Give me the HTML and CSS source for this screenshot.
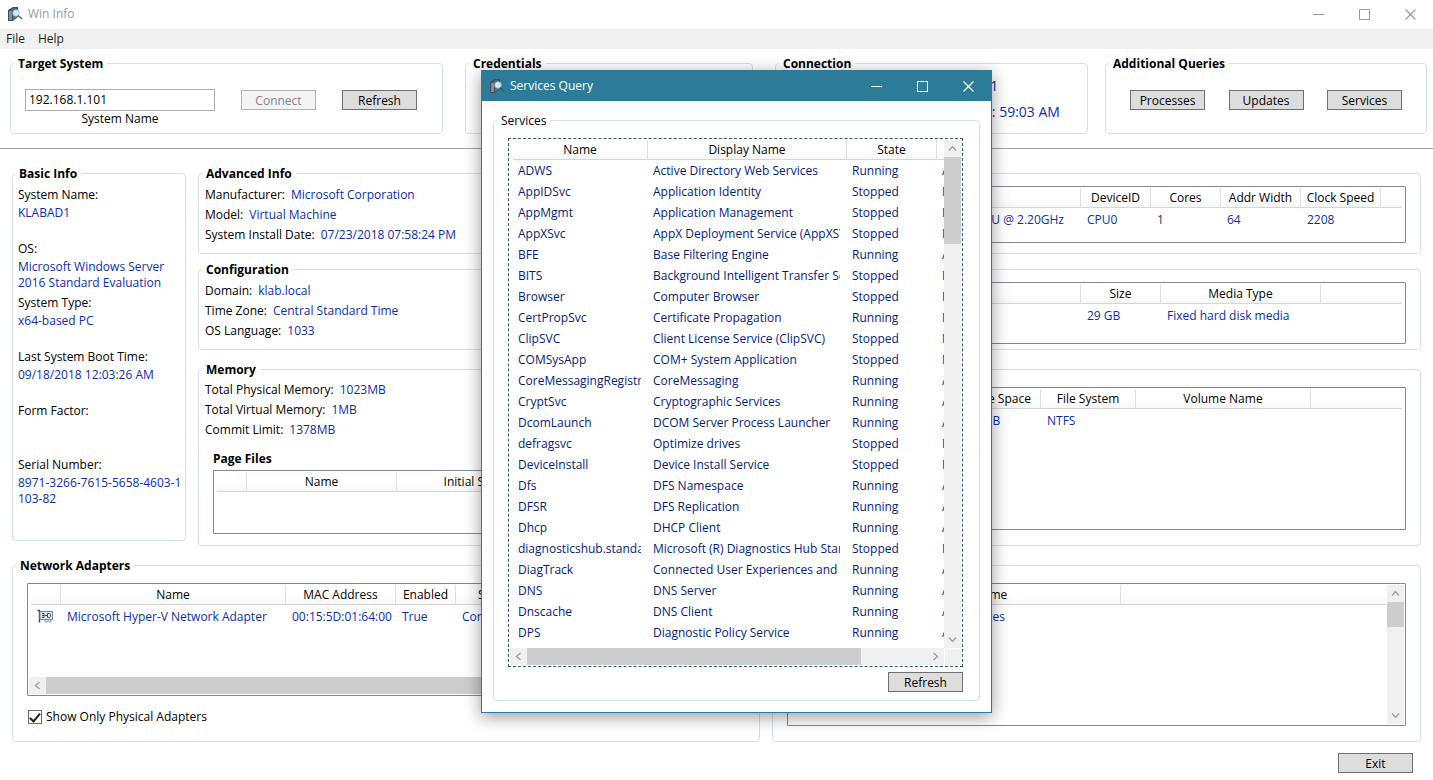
FILE: index.html
```html
<!DOCTYPE html>
<html lang="en">
<head>
<meta charset="utf-8">
<title>Win Info</title>
<link rel="stylesheet" href="styles.css">
</head>
<body>
<svg class="defs" width="0" height="0" aria-hidden="true">
  <symbol id="app" viewBox="0 0 16 16">
    <path d="M1 4 6 1h5v10l-5 4H1z" fill="#414a5e"/>
    <path d="M2 5h3v9H2z" fill="#858c9a"/>
    <path d="M2 4.500 6.500 2H10L6 4.500z" fill="#59637a"/>
    <path d="M6 5v9l4-3V3z" fill="#6f6a6e"/>
    <circle cx="9" cy="7" r="3.300" fill="#c9effb" stroke="#8fb2c4" stroke-width=".8"/>
    <path d="m11.200 9.500 3.800 3.500" stroke="#385a7c" stroke-width="1.200"/>
  </symbol>
  <symbol id="nic" viewBox="0 0 16 16">
    <path d="M.5 1.500h2v12" fill="none" stroke="#2d4a66" stroke-width="1.400"/>
    <path d="M3 2.500h12.500v8H3z" fill="#dce9ee" stroke="#6e8796"/>
    <path d="M5 4.500h2v4H5m0-2h2M8 6.500h2M10.500 4.500h2l1 1v2l-1 1h-2z" fill="none" stroke="#2d4a66"/>
    <path d="M8 11v2h2v-1h2v1h2v-2" fill="none" stroke="#8199a6"/>
  </symbol>
  <symbol id="min" viewBox="0 0 11 11"><path d="M0 5.500h11" stroke="currentColor"/></symbol>
  <symbol id="max" viewBox="0 0 11 11"><path d="M.5.5h10v10H.5z" fill="none" stroke="currentColor"/></symbol>
  <symbol id="close" viewBox="0 0 11 11"><path d="m.5.5 10 10m0-10-10 10" stroke="currentColor" stroke-width="1.200"/></symbol>
  <symbol id="up" viewBox="0 0 9 9"><path d="M1 6.500 4.500 2.500 8 6.500" fill="none" stroke="currentColor" stroke-width="1.400"/></symbol>
  <symbol id="down" viewBox="0 0 9 9"><path d="M1 2.500 4.500 6.500 8 2.500" fill="none" stroke="currentColor" stroke-width="1.400"/></symbol>
  <symbol id="left" viewBox="0 0 9 9"><path d="M6.500 1 2.500 4.500 6.500 8" fill="none" stroke="currentColor" stroke-width="1.400"/></symbol>
  <symbol id="right" viewBox="0 0 9 9"><path d="M2.500 1 6.500 4.500 2.500 8" fill="none" stroke="currentColor" stroke-width="1.400"/></symbol>
</svg>

<header class="titlebar">
  <svg class="app-icon"><use href="#app"/></svg>
  <h1 class="title">Win Info</h1>
  <button class="caption" aria-label="Minimize"><svg><use href="#min"/></svg></button>
  <button class="caption" aria-label="Maximize"><svg><use href="#max"/></svg></button>
  <button class="caption" aria-label="Close"><svg><use href="#close"/></svg></button>
</header>
<nav class="menu">
  <button class="menu-item">File</button>
  <button class="menu-item">Help</button>
</nav>

<section class="top">
  <fieldset class="group target">
    <legend>Target System</legend>
    <div class="system">
      <input id="system" type="text" value="192.168.1.101">
      <label for="system">System Name</label>
    </div>
    <button class="btn" disabled>Connect</button>
    <button class="btn">Refresh</button>
  </fieldset>
  <fieldset class="group credentials"><legend>Credentials</legend></fieldset>
  <fieldset class="group connection">
    <legend>Connection</legend>
    <p>Computer: <b>192.168.1.101</b></p>
    <p>Updated: <b>09/18/2018 12: 59:03 AM</b></p>
  </fieldset>
  <fieldset class="group queries">
    <legend>Additional Queries</legend>
    <button class="btn">Processes</button>
    <button class="btn">Updates</button>
    <button class="btn">Services</button>
  </fieldset>
</section>
<hr class="rule">

<main class="main">
  <fieldset class="group basic">
    <legend>Basic Info</legend>
    <dl class="facts">
      <div><dt>System Name:</dt><dd>KLABAD1</dd></div>
      <div><dt>OS:</dt><dd>Microsoft Windows Server 2016 Standard Evaluation</dd></div>
      <div><dt>System Type:</dt><dd>x64-based PC</dd></div>
      <div><dt>Last System Boot Time:</dt><dd>09/18/2018 12:03:26 AM</dd></div>
      <div><dt>Form Factor:</dt><dd></dd></div>
      <div><dt>Serial Number:</dt><dd class="serial">8971-3266-7615-5658-4603-1103-82</dd></div>
    </dl>
  </fieldset>

  <fieldset class="group">
    <legend>Advanced Info</legend>
    <dl class="pairs">
      <div><dt>Manufacturer:</dt><dd>Microsoft Corporation</dd></div>
      <div><dt>Model:</dt><dd>Virtual Machine</dd></div>
      <div><dt>System Install Date:</dt><dd>07/23/2018 07:58:24 PM</dd></div>
    </dl>
  </fieldset>
  <fieldset class="group lists">
    <legend>Processor</legend>
    <div class="list list-cpu">
      <table class="grid">
        <colgroup><col class="w30"><col class="w260"><col class="w70"><col class="w70"><col class="w80"><col class="w80"><col></colgroup>
        <thead><tr><th></th><th>Name</th><th>DeviceID</th><th>Cores</th><th>Addr Width</th><th>Clock Speed</th><th></th></tr></thead>
        <tbody><tr><td></td><td>Intel(R) Core(TM) i7-8750H CPU @ 2.20GHz</td><td>CPU0</td><td>1</td><td>64</td><td>2208</td><td></td></tr></tbody>
      </table>
    </div>
  </fieldset>

  <fieldset class="group">
    <legend>Configuration</legend>
    <dl class="pairs">
      <div><dt>Domain:</dt><dd>klab.local</dd></div>
      <div><dt>Time Zone:</dt><dd>Central Standard Time</dd></div>
      <div><dt>OS Language:</dt><dd>1033</dd></div>
    </dl>
  </fieldset>
  <fieldset class="group lists">
    <legend>Disks</legend>
    <div class="list list-disk">
      <table class="grid">
        <colgroup><col class="w30"><col class="w260"><col class="w80"><col class="w160"><col></colgroup>
        <thead><tr><th></th><th>Name</th><th>Size</th><th>Media Type</th><th></th></tr></thead>
        <tbody><tr><td></td><td>Virtual HD</td><td>29 GB</td><td>Fixed hard disk media</td><td></td></tr></tbody>
      </table>
    </div>
  </fieldset>

  <fieldset class="group tall memory">
    <legend>Memory</legend>
    <dl class="pairs">
      <div><dt>Total Physical Memory:</dt><dd>1023MB</dd></div>
      <div><dt>Total Virtual Memory:</dt><dd>1MB</dd></div>
      <div><dt>Commit Limit:</dt><dd>1378MB</dd></div>
    </dl>
    <h2 class="subhead">Page Files</h2>
    <div class="list list-page">
      <table class="grid">
        <colgroup><col class="w30"><col class="w150"><col class="w150"><col></colgroup>
        <thead><tr><th></th><th>Name</th><th>Initial Size</th><th></th></tr></thead>
      </table>
    </div>
  </fieldset>
  <fieldset class="group lists tall">
    <legend>Volumes</legend>
    <div class="list list-volume">
      <table class="grid">
        <colgroup><col class="w30"><col class="w70"><col class="w70"><col class="w80"><col class="w95"><col class="w175"><col></colgroup>
        <thead><tr><th></th><th>Name</th><th>Size</th><th>Free Space</th><th>File System</th><th>Volume Name</th><th></th></tr></thead>
        <tbody><tr><td></td><td>C:</td><td>29 GB</td><td>18 GB</td><td>NTFS</td><td></td><td></td></tr></tbody>
      </table>
    </div>
  </fieldset>

  <fieldset class="group lists tall network">
    <legend>Network Adapters</legend>
    <div class="list list-network">
      <table class="grid">
        <colgroup><col class="w30"><col class="w225"><col class="w110"><col class="w60"><col class="w80"><col></colgroup>
        <thead><tr><th></th><th>Name</th><th>MAC Address</th><th>Enabled</th><th>Status</th><th></th></tr></thead>
        <tbody><tr><td><svg class="nic"><use href="#nic"/></svg></td><td>Microsoft Hyper-V Network Adapter</td><td>00:15:5D:01:64:00</td><td>True</td><td>Connected</td><td></td></tr></tbody>
      </table>
      <div class="bar bar-h">
        <button class="arrow" aria-label="Scroll left"><svg><use href="#left"/></svg></button>
        <div class="thumb thumb-network"></div>
        <button class="arrow end" aria-label="Scroll right"><svg><use href="#right"/></svg></button>
      </div>
    </div>
    <label class="check"><input type="checkbox" checked>Show Only Physical Adapters</label>
  </fieldset>
  <fieldset class="group lists tall">
    <legend>Features</legend>
    <div class="list list-feature">
      <table class="grid">
        <colgroup><col class="w70"><col class="w260"><col></colgroup>
        <thead><tr><th>ID</th><th>Name</th><th></th></tr></thead>
        <tbody><tr><td></td><td>File and Storage Services</td><td></td></tr></tbody>
      </table>
      <div class="bar bar-v">
        <button class="arrow" aria-label="Scroll up"><svg><use href="#up"/></svg></button>
        <div class="thumb thumb-feature"></div>
        <button class="arrow end" aria-label="Scroll down"><svg><use href="#down"/></svg></button>
      </div>
    </div>
  </fieldset>
</main>
<footer class="footer"><button class="btn">Exit</button></footer>

<section class="dialog" role="dialog" aria-labelledby="dialog-title">
  <header class="titlebar dialog-bar">
    <svg class="app-icon"><use href="#app"/></svg>
    <h2 class="title" id="dialog-title">Services Query</h2>
    <button class="caption" aria-label="Minimize"><svg><use href="#min"/></svg></button>
    <button class="caption" aria-label="Maximize"><svg><use href="#max"/></svg></button>
    <button class="caption" aria-label="Close"><svg><use href="#close"/></svg></button>
  </header>
  <div class="dialog-body">
    <fieldset class="group services">
      <legend>Services</legend>
      <div class="service-list">
        <div class="viewport">
          <table class="grid service-grid">
            <colgroup><col class="w135"><col class="w199"><col class="w90"><col class="w90"></colgroup>
            <thead><tr><th>Name</th><th>Display Name</th><th>State</th><th></th></tr></thead>
            <tbody>
              <tr><td><div>ADWS</div></td><td><div>Active Directory Web Services</div></td><td>Running</td><td>Auto</td></tr>
              <tr><td><div>AppIDSvc</div></td><td><div>Application Identity</div></td><td>Stopped</td><td>Manual</td></tr>
              <tr><td><div>AppMgmt</div></td><td><div>Application Management</div></td><td>Stopped</td><td>Manual</td></tr>
              <tr><td><div>AppXSvc</div></td><td><div>AppX Deployment Service (AppXSVC)</div></td><td>Stopped</td><td>Manual</td></tr>
              <tr><td><div>BFE</div></td><td><div>Base Filtering Engine</div></td><td>Running</td><td>Auto</td></tr>
              <tr><td><div>BITS</div></td><td><div>Background Intelligent Transfer Service</div></td><td>Stopped</td><td>Manual</td></tr>
              <tr><td><div>Browser</div></td><td><div>Computer Browser</div></td><td>Stopped</td><td>Manual</td></tr>
              <tr><td><div>CertPropSvc</div></td><td><div>Certificate Propagation</div></td><td>Running</td><td>Manual</td></tr>
              <tr><td><div>ClipSVC</div></td><td><div>Client License Service (ClipSVC)</div></td><td>Stopped</td><td>Manual</td></tr>
              <tr><td><div>COMSysApp</div></td><td><div>COM+ System Application</div></td><td>Stopped</td><td>Manual</td></tr>
              <tr><td><div>CoreMessagingRegistrar</div></td><td><div>CoreMessaging</div></td><td>Running</td><td>Auto</td></tr>
              <tr><td><div>CryptSvc</div></td><td><div>Cryptographic Services</div></td><td>Running</td><td>Auto</td></tr>
              <tr><td><div>DcomLaunch</div></td><td><div>DCOM Server Process Launcher</div></td><td>Running</td><td>Auto</td></tr>
              <tr><td><div>defragsvc</div></td><td><div>Optimize drives</div></td><td>Stopped</td><td>Manual</td></tr>
              <tr><td><div>DeviceInstall</div></td><td><div>Device Install Service</div></td><td>Stopped</td><td>Manual</td></tr>
              <tr><td><div>Dfs</div></td><td><div>DFS Namespace</div></td><td>Running</td><td>Auto</td></tr>
              <tr><td><div>DFSR</div></td><td><div>DFS Replication</div></td><td>Running</td><td>Auto</td></tr>
              <tr><td><div>Dhcp</div></td><td><div>DHCP Client</div></td><td>Running</td><td>Auto</td></tr>
              <tr><td><div>diagnosticshub.standardcollector</div></td><td><div>Microsoft (R) Diagnostics Hub Standard</div></td><td>Stopped</td><td>Manual</td></tr>
              <tr><td><div>DiagTrack</div></td><td><div>Connected User Experiences and Telemetry</div></td><td>Running</td><td>Auto</td></tr>
              <tr><td><div>DNS</div></td><td><div>DNS Server</div></td><td>Running</td><td>Auto</td></tr>
              <tr><td><div>Dnscache</div></td><td><div>DNS Client</div></td><td>Running</td><td>Auto</td></tr>
              <tr><td><div>DPS</div></td><td><div>Diagnostic Policy Service</div></td><td>Running</td><td>Auto</td></tr>
            </tbody>
          </table>
        </div>
        <div class="bar bar-v">
          <button class="arrow" aria-label="Scroll up"><svg><use href="#up"/></svg></button>
          <div class="thumb thumb-rows"></div>
          <button class="arrow end" aria-label="Scroll down"><svg><use href="#down"/></svg></button>
        </div>
        <div class="bar bar-h">
          <button class="arrow" aria-label="Scroll left"><svg><use href="#left"/></svg></button>
          <div class="thumb thumb-columns"></div>
          <button class="arrow end" aria-label="Scroll right"><svg><use href="#right"/></svg></button>
        </div>
        <div class="corner"></div>
      </div>
      <button class="btn">Refresh</button>
    </fieldset>
  </div>
</section>
</body>
</html>
```
FILE: styles.css
```css
* { box-sizing: border-box; }
body {
  margin: 0;
  position: relative;
  min-height: 100vh;
  background: #fff;
  color: #000;
  font: 12px/16px "Open Sans", "Noto Sans", sans-serif;
}
button, input { font: inherit; color: inherit; }
p, dl, dd, h1, h2 { margin: 0; }
svg { display: block; }
.defs { position: absolute; }

/* window chrome */
.titlebar { display: flex; align-items: center; height: 28px; margin-bottom: 1px; padding-left: 7px; color: #999; }
.app-icon { width: 16px; height: 16px; margin-right: 5px; }
.title { flex: 1; font-size: 12px; font-weight: 400; }
.caption { width: 46px; height: 27px; padding: 0; border: 0; background: none; display: grid; place-items: center; }
.caption svg { width: 11px; height: 11px; }
.menu { display: flex; height: 20px; background: #f0f0f0; color: #1c1c1c; }
.menu-item { border: 0; background: none; padding: 0 7px 0 6px; }

/* group boxes */
.group {
  min-width: 0;
  margin: 0;
  padding: 4px 6px;
  border: 1px solid #d5dfe5;
  border-radius: 4px;
}
.group legend { height: 16px; padding: 0 4px; margin-left: -3px; font-weight: 700; line-height: 18px; }
.btn {
  width: 75px;
  height: 20px;
  padding: 1px 0 0;
  border: 1px solid #707070;
  background: #ddd;
  line-height: 16px;
}
.btn:disabled { border-color: #adb2b5; background: #f4f4f4; color: #838383; }

.top {
  display: grid;
  grid-template-columns: minmax(0, 455fr) minmax(0, 310fr) minmax(0, 330fr) minmax(0, 322fr);
  padding: 6px 6px 0 10px;
}
.top .group { height: 79px; }
.target, .queries { display: flex; align-items: flex-start; }
.target { margin-right: 22px; padding: 18px 25px 0 14px; gap: 26px; }
.target .btn { margin-top: 1px; }
.system { flex: 1; display: flex; flex-direction: column; align-items: center; }
.system input { width: 100%; height: 22px; padding: 0 3px 2px; border: 1px solid #abadb3; outline: 0; }
.credentials { margin-right: 22px; }
.connection { margin-right: 17px; padding-top: 2px; font-size: 14px; }
.connection legend { font-size: 12px; }
.connection p { line-height: 26px; padding-left: 52px; white-space: nowrap; }
.connection b { font-weight: 400; color: #0b2fa8; }
.queries { padding: 19px 24px 0; justify-content: space-between; }
.group.queries legend { margin-left: -21px; }
.rule { height: 1px; margin: 14px 0 16px; border: 0; background: #a0a0a0; }

.main {
  display: grid;
  grid-template-columns: 174px minmax(0, 562fr) minmax(0, 649fr);
  gap: 7px 12px;
  padding: 0 12px;
}
.main > .group { min-height: 89px; }
.main > .tall { min-height: 185px; margin-top: 4px; }
.basic { grid-row: span 3; margin-bottom: 5px; padding: 6px 0 6px 5px; }
.facts > div { height: 54px; }
.facts dd { margin-top: 2px; }
.serial { word-break: break-all; }
dd { color: #0b2fa8; }
.pairs > div { display: flex; gap: 6px; line-height: 20px; }
.network { grid-column: span 2; }
.lists { padding: 5px 14px 0; }
.lists.tall { padding-top: 10px; }
.memory { padding-top: 3px; }
.group.target legend, .group.lists legend, .group.services legend { margin-left: -11px; }
.subhead { margin: 11px 8px 3px; font-size: 12px; line-height: 16px; }

/* list views */
.list { border: 1px solid #828790; border-radius: 1px; padding: 1px 3px; overflow: hidden; }
.list-cpu { height: 57px; }
.list-disk { height: 62px; }
.list-page { height: 64px; margin: 0 8px; }
.list-volume, .list-feature { height: 143px; }
.list-network { height: 113px; padding-right: 1px; padding-left: 1px; display: flex; flex-direction: column; justify-content: space-between; }
.list-network .grid { margin-left: 2px; }
.list-feature { display: flex; gap: 1px; padding-right: 1px; }
.list-feature .grid { align-self: flex-start; }
.grid { width: 100%; border-collapse: separate; border-spacing: 0; table-layout: fixed; }
.grid th {
  height: 20px;
  padding: 0;
  font-weight: 400;
  border-right: 1px solid #dedfe1;
  border-bottom: 1px solid #d5d5d5;
  background: linear-gradient(#fff 50%, #f7f8fa);
  white-space: nowrap;
}
.grid th:last-child { border-right: 0; }
.grid td { height: 24px; padding: 0 6px; color: #0b2fa8; white-space: nowrap; overflow: hidden; }
.nic { width: 16px; height: 16px; }
.w30 { width: 30px; } .w60 { width: 60px; } .w70 { width: 70px; } .w80 { width: 80px; }
.w90 { width: 90px; } .w95 { width: 95px; } .w110 { width: 110px; } .w135 { width: 135px; }
.w150 { width: 150px; } .w160 { width: 160px; } .w175 { width: 175px; } .w199 { width: 199px; }
.w225 { width: 225px; } .w260 { width: 260px; }

/* scroll bars */
.bar { display: flex; background: #f0f0f0; color: #a0a0a0; }
.bar-v { flex: 0 0 17px; flex-direction: column; }
.bar-h { height: 17px; }
.arrow { flex: 0 0 17px; width: 17px; height: 17px; padding: 0; border: 0; background: none; display: grid; place-items: center; }
.arrow svg { width: 9px; height: 9px; }
.arrow.end { margin: auto 0 0 auto; }
.thumb { background: #cdcdcd; }
.thumb-network { flex: 0 0 88%; }
.thumb-feature { height: 25px; }
.thumb-rows { height: 87px; }
.thumb-columns { width: 334px; }

.check { display: flex; align-items: center; gap: 4px; margin-top: 13px; width: max-content; }
.check input {
  appearance: none;
  width: 14px;
  height: 14px;
  margin: 0 0 0 1px;
  border: 1px solid #707070;
  display: grid;
  place-items: center;
}
.check input:checked::before {
  content: "";
  width: 4px;
  height: 9px;
  margin-bottom: 2px;
  border: solid #212121;
  border-width: 0 2px 2px 0;
  transform: rotate(40deg);
}
.footer { display: flex; justify-content: flex-end; padding: 11px 20px 7px; }

/* services window, floating over the main one */
.dialog {
  position: absolute;
  left: 481px;
  top: 70px;
  width: 511px;
  background: #fff;
  border: 1px solid #2c7c99;
  box-shadow: 0 4px 16px rgba(0, 0, 0, .4);
}
.dialog-bar { height: 30px; margin: 0; background: #2c7c99; color: #fff; }
.dialog-body { padding: 11px; }
.services { padding: 10px 16px 8px 14px; display: flex; flex-direction: column; align-items: flex-end; }
.group.services legend { font-weight: 400; }
.services .btn { margin-top: 5px; }
.service-list {
  width: 100%;
  display: grid;
  grid-template-columns: minmax(0, 1fr) 17px;
  grid-template-rows: 508px 17px;
  padding: 1px;
  border: 1px dashed #2f5a78;
}
.viewport { overflow: hidden; padding-left: 3px; }
.service-grid { width: 514px; }
.service-grid td { height: 21px; padding: 0 7px 0 5px; color: #061c78; }
.service-grid td div { overflow: hidden; }
.corner { background: #f0f0f0; border: solid #fff; border-width: 1px 0 0 1px; }
```
